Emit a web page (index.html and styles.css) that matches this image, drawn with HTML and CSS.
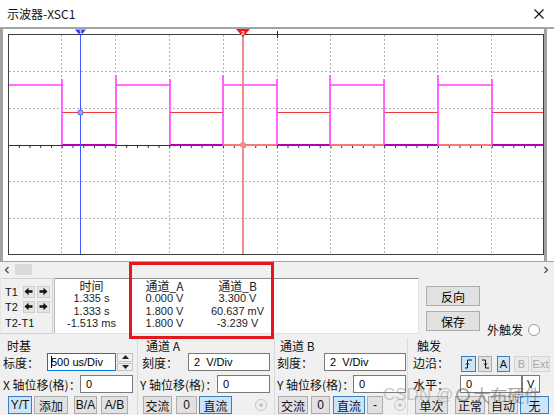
FILE: index.html
```html
<!DOCTYPE html>
<html lang="zh">
<head>
<meta charset="utf-8">
<title>示波器-XSC1</title>
<link rel="stylesheet" href="styles.css">
</head>
<body>
<div class="win">
  <header class="titlebar">
    <span class="title">示波器-XSC1</span>
    <svg class="close" width="10" height="10" viewBox="0 0 10 10"><path d="M0.5 0.5L9.5 9.5M9.5 0.5L0.5 9.5" stroke="#111" stroke-width="1.1"/></svg>
  </header>

  <section class="scope">
    <div class="frame">
      <svg class="screen" width="541" height="232" viewBox="3 29 541 232" xmlns="http://www.w3.org/2000/svg">
        <defs>
          <pattern id="tk" patternUnits="userSpaceOnUse" x="8" y="145" width="10.75" height="4">
            <rect x="0" y="0" width="1" height="3" fill="#303030"/>
          </pattern>
        </defs>
        <rect x="8.5" y="34.5" width="535" height="220" fill="#fff" stroke="#404040"/>
        <g stroke="#b4b4b4" stroke-dasharray="2 2" stroke-width="1" fill="none">
          <path d="M61.5 35V254M115.5 35V254M169.5 35V254M223.5 35V254M277.5 35V254M330.5 35V254M384.5 35V254M437.5 35V254M491.5 35V254"/>
          <path d="M9 71.5H543M9 108.5H543M9 181.5H543M9 218.5H543"/>
        </g>
        <path d="M9 145.5H543" stroke="#303030"/>
        <rect x="8" y="146" width="535" height="3" fill="url(#tk)"/>
        <path d="M277.5 31V38" stroke="#303030"/>

        <g stroke="#f47a7a" stroke-width="2" fill="none">
          <path d="M223 145H277M330 145H384M438 145H492"/>
        </g>
        <g stroke="#b400b4" stroke-width="2" fill="none">
          <path d="M62 145H116M170 145H223M277 145H330M384 145H438M492 145H543"/>
        </g>
        <g stroke="#ee3a3a" stroke-width="1" fill="none">
          <path d="M62 112.5H116M170 112.5H223M277 112.5H330M384 112.5H438M492 112.5H543"/>
        </g>
        <g stroke="#ff70ff" stroke-width="2" fill="none">
          <path d="M9 85H62M116 85H170M223 85H277M330 85H384M438 85H492"/>
        </g>
        <g stroke="#ff48ff" stroke-width="1.6" fill="none">
          <path d="M62 79V145M116 75V145M170 79V145M223 75V145M277 79V145M330 75V145M384 79V145M438 75V145M492 79V145"/>
        </g>

        <path d="M80.5 34V254" stroke="#4458ff" stroke-width="1"/>
        <circle cx="80.5" cy="112.5" r="2.6" fill="#9aa6ff" stroke="#4458ff" stroke-width="1"/>
        <polygon points="75,29.5 86,29.5 80.5,36" fill="#2a3cff"/>
        <text x="80.5" y="34" font-size="5.5" fill="#fff" text-anchor="middle" font-family="Liberation Sans, sans-serif" font-weight="bold">1</text>

        <path d="M243 34V254" stroke="#f58a8a" stroke-width="2"/>
        <circle cx="243" cy="145" r="3" fill="#f58a8a"/>
        <polygon points="236,29 250,29 243,37" fill="#ff1414"/>
        <text x="243" y="34.5" font-size="6" fill="#fff" text-anchor="middle" font-family="Liberation Sans, sans-serif" font-weight="bold">2</text>
      </svg>
    </div>
  </section>

  <div class="hscroll">
    <svg class="sarrow" width="6" height="8" viewBox="0 0 6 8"><path d="M4.5 1L1.5 4L4.5 7" stroke="#555" stroke-width="1.4" fill="none"/></svg>
    <span class="thumb"></span>
    <span class="track"></span>
    <svg class="sarrow" width="6" height="8" viewBox="0 0 6 8"><path d="M1.5 1L4.5 4L1.5 7" stroke="#555" stroke-width="1.4" fill="none"/></svg>
  </div>

  <div class="readout">
    <div class="tpanel">
      <div class="trow">
        <span class="tlabel">T1</span>
        <span class="abtn"><svg width="9" height="9" viewBox="0 0 9 9"><path d="M0.5 4.5L4.5 0.8V3.3H8.5V5.7H4.5V8.2Z" fill="#111"/></svg></span>
        <span class="abtn"><svg width="9" height="9" viewBox="0 0 9 9"><path d="M8.5 4.5L4.5 0.8V3.3H0.5V5.7H4.5V8.2Z" fill="#111"/></svg></span>
      </div>
      <div class="trow">
        <span class="tlabel">T2</span>
        <span class="abtn"><svg width="9" height="9" viewBox="0 0 9 9"><path d="M0.5 4.5L4.5 0.8V3.3H8.5V5.7H4.5V8.2Z" fill="#111"/></svg></span>
        <span class="abtn"><svg width="9" height="9" viewBox="0 0 9 9"><path d="M8.5 4.5L4.5 0.8V3.3H0.5V5.7H4.5V8.2Z" fill="#111"/></svg></span>
      </div>
      <div class="trow trow-last">
        <span class="tlabel">T2-T1</span>
      </div>
    </div>

    <div class="table">
      <span class="th">时间</span><span class="th">通道_A</span><span class="th">通道_B</span>
      <span>1.335 s</span><span>0.000 V</span><span>3.300 V</span>
      <span>1.333 s</span><span>1.800 V</span><span>60.637 mV</span>
      <span>-1.513 ms</span><span>1.800 V</span><span>-3.239 V</span>
    </div>

    <div class="actions">
      <span class="pbtn">反向</span>
      <span></span>
      <span class="pbtn">保存</span>
      <span class="ext">外触发<span class="radio white"></span></span>
    </div>
  </div>

  <div class="groups">
    <div class="group g-time">
      <div class="gh">时基</div>
      <div class="row r1">
        <span class="lab w44">标度：</span>
        <span class="inp focus w69"><span class="caret"></span>500 us/Div</span>
        <span class="spin">
          <span class="sp"><svg width="7" height="4" viewBox="0 0 7 4"><path d="M0 4L3.5 0L7 4Z" fill="#222"/></svg></span>
          <span class="sp"><svg width="7" height="4" viewBox="0 0 7 4"><path d="M0 0L3.5 4L7 0Z" fill="#222"/></svg></span>
        </span>
      </div>
      <div class="row r2">
        <span class="lab w77">X 轴位移(格)：</span>
        <span class="inp w53">0</span>
      </div>
      <div class="row r3 pl8">
        <span class="btn on w24">Y/T</span>
        <span class="btn w34 ml2">添加</span>
        <span class="btn w23 ml6">B/A</span>
        <span class="btn w27 ml4">A/B</span>
      </div>
    </div>

    <div class="group g-a">
      <div class="gh">通道 A</div>
      <div class="row r1 pl4">
        <span class="lab w46">刻度：</span>
        <span class="inp w82">2&nbsp;&nbsp;V/Div</span>
      </div>
      <div class="row r2 pl2">
        <span class="lab w77">Y 轴位移(格)：</span>
        <span class="inp w53">0</span>
      </div>
      <div class="row r3 pl5">
        <span class="btn w29">交流</span>
        <span class="btn w21 ml4">0</span>
        <span class="btn on w33 ml2">直流</span>
        <span class="radio dis ml23"></span>
      </div>
    </div>

    <div class="group g-b">
      <div class="gh">通道 B</div>
      <div class="row r1 pl2">
        <span class="lab w47">刻度：</span>
        <span class="inp w82">2&nbsp;&nbsp;V/Div</span>
      </div>
      <div class="row r2 pl2">
        <span class="lab w76">Y 轴位移(格)：</span>
        <span class="inp w53">0</span>
      </div>
      <div class="row r3 pl3">
        <span class="btn w30">交流</span>
        <span class="btn w19 ml3">0</span>
        <span class="btn on w32 ml3">直流</span>
        <span class="btn w16 ml2">-</span>
        <span class="radio dis ml11"></span>
      </div>
    </div>

    <div class="group g-trig">
      <div class="gh">触发</div>
      <div class="row r1 pl5">
        <span class="lab w48">边沿：</span>
        <span class="btn sm on w15"><svg width="9" height="10" viewBox="0 0 9 10"><path d="M1 9H3.5V1H8" stroke="#111" stroke-width="1" fill="none"/><path d="M2 5.5L3.5 3.5L5 5.5" stroke="#111" stroke-width="0.9" fill="none"/></svg></span>
        <span class="btn sm w14 ml2"><svg width="9" height="10" viewBox="0 0 9 10"><path d="M1 1H4.5V9H8" stroke="#111" stroke-width="1" fill="none"/><path d="M3 4.5L4.5 6.5L6 4.5" stroke="#111" stroke-width="0.9" fill="none"/></svg></span>
        <span class="btn sm on w13 ml5">A</span>
        <span class="btn sm dis w15 ml4">B</span>
        <span class="btn sm dis w19 ml2">Ext</span>
      </div>
      <div class="row r2 pl5">
        <span class="lab w47">水平：</span>
        <span class="inp w62">0</span>
        <span class="inp unit w18">V</span>
      </div>
      <div class="row r3 pl7">
        <span class="btn w33">单次</span>
        <span class="btn w30 ml7">正常</span>
        <span class="btn w30 ml3">自动</span>
        <span class="btn on w29 ml2">无</span>
      </div>
    </div>
  </div>

  <div class="annot"></div>
  <div class="watermark"><span class="wm-csdn">CSDN @</span><span class="wm-logo"></span><span class="wm-name">大布硬件</span></div>
</div>
</body>
</html>
```

FILE: styles.css
```css
* { box-sizing: border-box; margin: 0; padding: 0; }
html, body { width: 554px; height: 415px; overflow: hidden; }
body {
  background: #f0f0f0;
  font-family: "Noto Sans CJK SC", "Liberation Sans", sans-serif;
  font-size: 12px;
  color: #000;
}
.win { position: relative; width: 554px; height: 415px; }

/* title bar */
.titlebar {
  height: 27px;
  background: #fff;
  display: flex;
  align-items: center;
  justify-content: space-between;
  padding: 0 10px 0 7px;
}
.title { font-size: 12px; line-height: 16px; color: #111; }
.close { display: block; margin-top: 1px; }

/* scope */
.scope {
  height: 235px;
  background: #fff;
  border-top: 2px solid #a3a3a3;
  border-bottom: 1px solid #a3a3a3;
}
.frame {
  width: 547px;
  height: 232px;
  border-left: 3px solid #a3a3a3;
  border-right: 3px solid #a3a3a3;
}
.screen { display: block; }

/* horizontal scrollbar */
.hscroll {
  height: 15px;
  display: flex;
  align-items: center;
  background: #f0f0f0;
  padding: 0 5px 0 4px;
}
.sarrow { display: block; }
.thumb {
  width: 17px;
  height: 11px;
  margin-left: 5px;
  background: #dadada;
}
.track { flex: 1; }

/* readout row */
.readout {
  height: 61px;
  display: flex;
  padding-top: 1px;
}
.tpanel {
  width: 53px;
  height: 56px;
  border: 1px solid #d2d2d2;
  border-left-color: #e6e6e6;
  padding: 6px 0 0 4px;
  font-family: "Liberation Sans", sans-serif;
  font-size: 11px;
}
.trow { display: flex; align-items: center; height: 13px; margin-bottom: 2px; }
.trow-last { margin-top: 3px; }
.tlabel { width: 18px; color: #111; white-space: nowrap; }
.abtn {
  width: 13px;
  height: 12px;
  margin-right: 2px;
  background: #e4e4e4;
  border: 1px solid #cfcfcf;
  display: flex;
  align-items: center;
  justify-content: center;
}
.abtn svg { display: block; }

.table {
  margin-left: 1px;
  width: 365px;
  height: 56px;
  background: #fff;
  border-top: 1px solid #8c8c8c;
  border-left: 1px solid #b8b8b8;
  border-right: 1px solid #e2e2e2;
  border-bottom: 1px solid #e2e2e2;
  display: grid;
  grid-template-columns: 73px 73px 73px;
  grid-auto-rows: 12.8px;
  font-family: "Liberation Sans", sans-serif;
  font-size: 11px;
  line-height: 13px;
  color: #1c1c28;
  text-align: center;
}
.table .th { font-family: "Noto Sans CJK SC", sans-serif; font-size: 12px; line-height: 14px; }

.actions {
  margin-left: 7px;
  padding-top: 8px;
  display: grid;
  grid-template-columns: 54px auto;
  grid-template-rows: 20px 20px;
  column-gap: 7px;
  row-gap: 5px;
}
.pbtn {
  background: #e1e1e1;
  border: 1px solid #adadad;
  display: flex;
  align-items: center;
  justify-content: center;
  font-size: 12px;
}
.ext {
  display: flex;
  align-items: center;
  align-self: end;
  margin-bottom: -7px;
  font-size: 12px;
  color: #111;
}
.ext .radio { margin-left: 5px; }

/* groups */
.groups { display: flex; height: 77px; }
.group {
  height: 77px;
  padding-top: 1px;
  border-right: 1px solid #d9d9d9;
}
.g-time { width: 138px; }
.g-a { width: 137px; }
.g-b { width: 133px; }
.g-trig { width: 146px; border-right: none; }
.gh { height: 13px; line-height: 13px; font-size: 12px; color: #111; }
.g-time .gh { padding-left: 7px; }
.g-a .gh { padding-left: 8px; }
.g-b .gh { padding-left: 5px; }
.g-trig .gh { padding-left: 9px; }

.row { display: flex; align-items: center; height: 18px; }
.r1 { margin-top: 1px; }
.r2 { margin-top: 4px; }
.r3 { margin-top: 3px; }
.g-time .r1, .g-time .r2 { padding-left: 3px; }

.lab { font-size: 12px; white-space: nowrap; color: #111; }

.inp {
  height: 18px;
  background: #fff;
  border: 1px solid #7a7a7a;
  font-family: "Liberation Sans", sans-serif;
  font-size: 11px;
  line-height: 16px;
  padding-left: 5px;
  white-space: nowrap;
  overflow: hidden;
  display: flex;
  align-items: center;
}
.inp.focus { border-color: #0078d7; padding-left: 3px; }
.inp.unit { padding-left: 4px; }
.caret {
  display: inline-block;
  width: 1px;
  height: 12px;
  background: #000;
  margin-right: -1px;
}
.spin {
  width: 16px;
  height: 18px;
  margin-left: 1px;
  display: flex;
  flex-direction: column;
  gap: 1px;
}
.sp {
  flex: 1;
  background: #f0f0f0;
  border: 1px solid #c4c4c4;
  display: flex;
  align-items: center;
  justify-content: center;
}
.sp svg { display: block; }

.btn {
  height: 18px;
  background: #e1e1e1;
  border: 1px solid #adadad;
  display: flex;
  align-items: center;
  justify-content: center;
  font-size: 12px;
  font-family: "Liberation Sans", "Noto Sans CJK SC", sans-serif;
  color: #111;
  white-space: nowrap;
}
.btn.sm { height: 16px; font-size: 11px; align-self: flex-start; margin-top: 3px; }
.btn.on { background: #cce4f7; border-color: #3d80c0; }
.btn.dis { background: #ebebeb; border-color: #d2d2d2; color: #a6a6a6; }
.btn svg { display: block; }

.radio {
  display: inline-block;
  width: 12px;
  height: 12px;
  border-radius: 50%;
  border: 1px solid #9a9a9a;
  background: #fff;
  position: relative;
}
.radio.dis { border-color: #c6c6c6; background: #f0f0f0; }
.radio.dis::after {
  content: "";
  position: absolute;
  left: 3px; top: 3px;
  width: 4px; height: 4px;
  border-radius: 50%;
  background: #c6c6c6;
}

/* widths & spacing helpers */
.w13 { width: 13px; } .w14 { width: 14px; } .w15 { width: 15px; } .w16 { width: 16px; }
.w18 { width: 18px; } .w19 { width: 19px; } .w21 { width: 21px; } .w23 { width: 23px; }
.w24 { width: 24px; } .w27 { width: 27px; } .w29 { width: 29px; } .w30 { width: 30px; }
.w32 { width: 32px; } .w33 { width: 33px; } .w34 { width: 34px; } .w44 { width: 44px; }
.w46 { width: 46px; } .w47 { width: 47px; } .w48 { width: 48px; } .w53 { width: 53px; }
.w62 { width: 62px; } .w69 { width: 69px; } .w76 { width: 76px; } .w77 { width: 77px; }
.w82 { width: 82px; }
.ml2 { margin-left: 2px; } .ml3 { margin-left: 3px; } .ml4 { margin-left: 4px; }
.ml5 { margin-left: 5px; } .ml6 { margin-left: 6px; } .ml7 { margin-left: 7px; }
.ml11 { margin-left: 11px; } .ml23 { margin-left: 23px; }
.pl2 { padding-left: 2px; } .pl3 { padding-left: 3px; } .pl4 { padding-left: 4px; }
.pl5 { padding-left: 5px; } .pl7 { padding-left: 7px; } .pl8 { padding-left: 8px; }

/* overlays */
.annot {
  position: absolute;
  left: 129px;
  top: 262px;
  width: 145px;
  height: 77px;
  border: 3px solid #e3171e;
  pointer-events: none;
}
.watermark {
  position: absolute;
  left: 383px;
  top: 382px;
  display: flex;
  align-items: center;
  gap: 2px;
  pointer-events: none;
  white-space: nowrap;
}
.wm-csdn {
  font-family: "Liberation Sans", sans-serif;
  font-size: 17px;
  color: rgba(150, 150, 150, 0.5);
}
.wm-logo {
  width: 14px;
  height: 14px;
  border-radius: 50%;
  border: 2px solid rgba(90, 90, 90, 0.5);
  margin: 0 1px;
}
.wm-name {
  font-size: 17px;
  color: rgba(80, 80, 80, 0.5);
}
```
